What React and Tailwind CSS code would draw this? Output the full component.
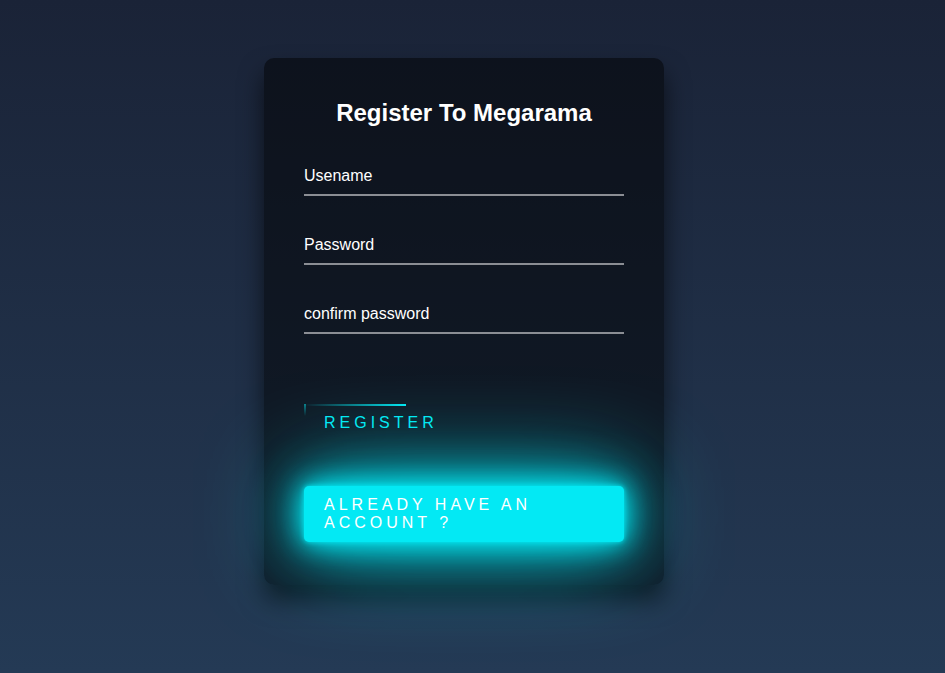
import React from 'react';

const fields = ['Usename', 'Password', 'confirm password'];

export default function App() {
  return (
    <div
      className="min-h-screen w-full bg-gradient-to-b from-[#1a2337] to-[#243a55] flex justify-center items-start pt-[58px] pr-[17px]"
      style={{ fontFamily: '"Liberation Sans", Arial, sans-serif' }}
    >
      <div className="w-[400px] rounded-[10px] bg-black/50 px-[40px] pt-[40px] pb-[43px] shadow-[0_15px_25px_rgba(0,0,0,0.6)]">
        <h2 className="text-white text-[24px] font-bold text-center leading-[30px] mb-[28px]">
          Register To Megarama
        </h2>

        <form onSubmit={(e) => e.preventDefault()}>
          {fields.map((f, i) => (
            <div key={f} className={i < 2 ? 'mb-[29px]' : 'mb-[30px]'}>
              <input
                type={i === 0 ? 'text' : 'password'}
                placeholder={f}
                className="block w-full h-[40px] pt-[2px] bg-transparent border-0 border-b-2 border-[#8b8e94] text-white text-[16px] outline-none placeholder:text-white"
              />
            </div>
          ))}

          <div className="flex flex-col items-start">
            <a
              href="#"
              className="relative mt-[40px] inline-block overflow-hidden px-[20px] py-[10px] text-[16px] leading-[18px] uppercase tracking-[4px] text-[#03e9f4]"
            >
              <span className="absolute top-0 left-0 h-[2px] w-[102px] bg-gradient-to-r from-transparent to-[#03e9f4]" />
              <span className="absolute top-0 left-0 w-[2px] h-[12px] bg-gradient-to-b from-[#03e9f4]/50 to-transparent" />
              Register
            </a>

            <a
              href="#"
              className="mt-[44px] block w-full rounded-[5px] bg-[#03e9f4] px-[20px] py-[10px] text-[16px] leading-[18px] uppercase tracking-[4px] text-white shadow-[0_0_5px_#03e9f4,0_0_25px_#03e9f4,0_0_50px_#03e9f4,0_0_100px_#03e9f4]"
            >
              Already have an account ?
            </a>
          </div>
        </form>
      </div>
    </div>
  );
}
